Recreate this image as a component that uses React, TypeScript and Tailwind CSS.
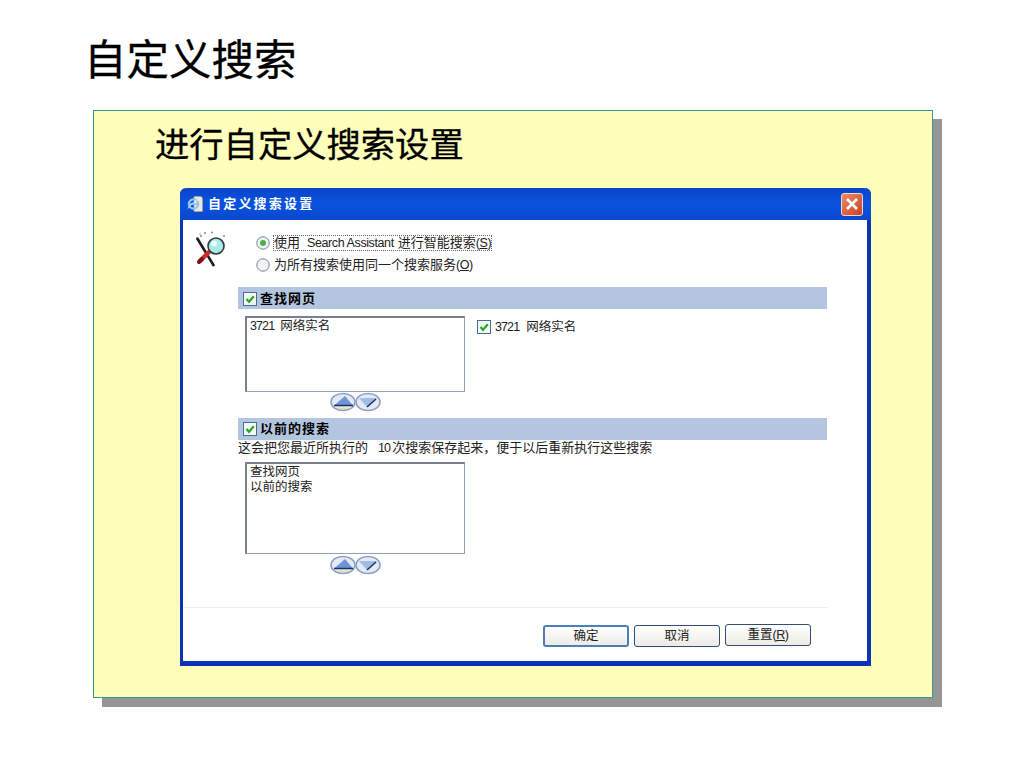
const cjk = "font-['Liberation_Sans','Noto_Sans_CJK_SC',sans-serif]";

function Lat({ children }: { children: React.ReactNode }) {
  return <span className="text-[12.5px] tracking-[-0.4px]">{children}</span>;
}

function Num({ children }: { children: React.ReactNode }) {
  return <span className="text-[12.5px] tracking-[-0.9px]">{children}</span>;
}

function Check() {
  return (
    <svg width="14" height="14" viewBox="0 0 14 14" className="shrink-0">
      <rect x="0.5" y="0.5" width="13" height="13" fill="#f7f7f2" stroke="#3f6f9c" />
      <path d="M3.5 7 L6 9.8 L10.8 4.2" fill="none" stroke="#2aa52a" strokeWidth="2.2" />
    </svg>
  );
}

function Radio({ on }: { on?: boolean }) {
  return (
    <svg width="14" height="14" viewBox="0 0 14 14" className="shrink-0">
      <circle cx="7" cy="7" r="6.2" fill="#f4f4f0" stroke="#6a86a8" />
      {on && <circle cx="7" cy="7" r="3" fill="#4cb04c" />}
    </svg>
  );
}

function Arrows() {
  return (
    <div className="flex justify-center w-[220px] -space-x-[1px]">
      <svg width="26" height="20" viewBox="0 0 26 20">
        <ellipse cx="13" cy="10" rx="12" ry="8.6" fill="#e4e9f3" stroke="#8d9fc4" strokeWidth="1.5" />
        <path d="M4 13.5 L15 4 L23 13.5 Z" fill="#6f95d8" />
        <path d="M4 13.5 L23 13.5" stroke="#1d2f63" strokeWidth="1.5" />
        <path d="M8 16.3 H18" stroke="#e4e08a" strokeWidth="1.2" />
      </svg>
      <svg width="26" height="20" viewBox="0 0 26 20">
        <ellipse cx="13" cy="10" rx="12" ry="8.6" fill="#e4e9f3" stroke="#8d9fc4" strokeWidth="1.5" />
        <path d="M4 6 L22 6 L12 15 Z" fill="#9dbde9" />
        <path d="M21 7 L12 15" stroke="#1d2f63" strokeWidth="1.5" />
      </svg>
    </div>
  );
}

function ListBox({ h, items }: { h: string; items: React.ReactNode[] }) {
  return (
    <div className={`w-[220px] ${h} bg-white border border-[#8fa0bc] border-t-2 border-l-2 border-t-[#7a7f8c] border-l-[#7a7f8c] pl-[3px] pt-[1px] text-[12.5px] leading-[15px] text-[#222]`}>
      {items.map((t, i) => (
        <div key={i}>{t}</div>
      ))}
    </div>
  );
}

function Btn({ children, strong }: { children: React.ReactNode; strong?: boolean }) {
  return (
    <div
      className={`w-[86px] h-[22px] rounded-[3px] border bg-gradient-to-b from-white to-[#ecebe4] flex items-center justify-center text-[12.5px] text-[#222] ${
        strong ? "border-2 border-[#4c7fb8]" : "border-[#2f4f78]"
      }`}
    >
      {children}
    </div>
  );
}

function Loupe() {
  return (
    <svg width="34" height="36" viewBox="0 0 34 36" className="shrink-0">
      <g fill="#7f8a99">
        <circle cx="2" cy="7" r="0.9" />
        <circle cx="6" cy="5" r="1" />
        <circle cx="10" cy="2" r="1" />
        <circle cx="17" cy="1.5" r="1" />
        <circle cx="5" cy="3" r="0.7" />
        <circle cx="29" cy="5" r="1" />
      </g>
      <path d="M2 7 L19 35" stroke="#1c1c1c" strokeWidth="2.6" />
      <path d="M14 21 L5 30" stroke="#c92c2c" strokeWidth="4.4" strokeLinecap="round" />
      <path d="M7 28 L4 31" stroke="#7a1414" strokeWidth="4" strokeLinecap="round" />
      <circle cx="21" cy="15" r="8" fill="#a9ece6" stroke="#2d3a40" strokeWidth="1.6" />
      <circle cx="19" cy="12.5" r="3" fill="#e9fffc" />
    </svg>
  );
}

function IeIcon() {
  return (
    <svg width="16" height="16" viewBox="0 0 16 16" className="shrink-0">
      <path d="M7 0.5 H14 L15.5 2 V15.5 H7 Z" fill="#ece8d4" stroke="#a9a58c" strokeWidth="0.6" />
      <circle cx="6.5" cy="8" r="4.6" fill="none" stroke="#8fc4f4" strokeWidth="2.4" />
      <path d="M2 8 H11" stroke="#8fc4f4" strokeWidth="1.8" />
      <path d="M1 12.5 C4 8 9 4 13 3" fill="none" stroke="#dff0ff" strokeWidth="1" />
    </svg>
  );
}

export default function App() {
  return (
    <div className={`w-[1024px] h-[768px] bg-white overflow-hidden pl-[84px] pt-[34px] text-black ${cjk}`}>
      <h1 className="text-[42.5px] leading-[54px] h-[54px] whitespace-nowrap [-webkit-text-stroke:0.3px_black]">自定义搜索</h1>
      <div className="ml-[9px] mt-[22px] w-[840px] h-[588px] bg-[#ffffbb] border border-[#3a9a8a] shadow-[9px_9px_0_#959595] pl-[61px] pt-[12px]">
        <h2 className="text-[34.3px] leading-[44px] h-[44px] whitespace-nowrap [-webkit-text-stroke:0.3px_black]">进行自定义搜索设置</h2>
        <div className="ml-[25px] mt-[21px] w-[691px] h-[478px] bg-white border-l-[3px] border-r-[4px] border-b-[5px] border-[#0a33b8] rounded-t-[6px] flex flex-col">
          <div className="h-[32px] -ml-[3px] -mr-[4px] rounded-t-[7px] bg-gradient-to-b from-[#0a45c8] via-[#0a53e0] to-[#0a48cc] flex items-center pl-[7px] pr-[8px] gap-[5px] shrink-0">
            <IeIcon />
            <span className="text-[13px] font-bold tracking-[2.2px] text-white">自定义搜索设置</span>
            <div className="ml-auto w-[22px] h-[23px] rounded-[3px] border border-[#f0d8d0] bg-gradient-to-br from-[#ee8a68] to-[#c8401c] flex items-center justify-center">
              <svg width="14" height="14" viewBox="0 0 14 14">
                <path d="M2 2 L12 12 M12 2 L2 12" stroke="#fff" strokeWidth="2.6" />
              </svg>
            </div>
          </div>
          <div className="relative flex-1 flex flex-col pl-[55px] pt-[16px] min-h-0">
            <div className="absolute left-[12px] top-[11px]">
              <Loupe />
            </div>
            <div className="pl-[18px] flex flex-col gap-[8px] text-[13px] text-[#222] leading-[14px] h-[51px]">
              <div className="flex items-center gap-[4px]">
                <Radio on />
                <span className="outline-dotted outline-1 outline-[#666] whitespace-nowrap">
                  使用<span className="ml-[7px] mr-[4px]"><Lat>Search Assistant</Lat></span>进行智能搜索<Lat>(<u>S</u>)</Lat>
                </span>
              </div>
              <div className="flex items-center gap-[4px]">
                <Radio />
                <span className="whitespace-nowrap">为所有搜索使用同一个搜索服务<Lat>(<u>O</u>)</Lat></span>
              </div>
            </div>
            <div className="w-[589px] h-[22px] bg-[#b4c6df] flex items-center pl-[5px] pt-[1px] gap-[3px] text-[13px] font-bold tracking-[1px]">
              <Check />
              <span>查找网页</span>
            </div>
            <div className="flex pl-[7px] mt-[7px]">
              <ListBox h="h-[76px]" items={[<><Num>3721</Num><span className="ml-[6px]">网络实名</span></>]} />
              <div className="flex items-center gap-[4px] ml-[12px] mt-[4px] h-[14px] text-[12.5px] text-[#222] whitespace-nowrap">
                <Check />
                <span><Num>3721</Num><span className="ml-[7px]">网络实名</span></span>
              </div>
            </div>
            <div className="pl-[7px]">
              <Arrows />
            </div>
            <div className="w-[589px] h-[22px] mt-[6px] bg-[#b4c6df] flex items-center pl-[5px] gap-[3px] text-[13px] font-bold tracking-[1px]">
              <Check />
              <span>以前的搜索</span>
            </div>
            <div className="text-[13px] leading-[14px] text-[#222] whitespace-nowrap mt-[1px]">
              这会把您最近所执行的<span className="ml-[10px] mr-[2px]"><Num>10</Num></span>次搜索保存起来，便于以后重新执行这些搜索
            </div>
            <div className="pl-[7px] mt-[7px]">
              <ListBox h="h-[92px]" items={["查找网页", "以前的搜索"]} />
              <div className="mt-[1px]">
                <Arrows />
              </div>
            </div>
            <div className="w-[644px] -ml-[55px] mt-[32px] border-t border-[#ececec]" />
            <div className="flex w-[573px] justify-end gap-[5px] mt-[17px]">
              <Btn strong>确定</Btn>
              <Btn>取消</Btn>
              <div className="-mt-[1px]">
                <Btn>
                  <span>重置<Lat>(<u>R</u>)</Lat></span>
                </Btn>
              </div>
            </div>
          </div>
        </div>
      </div>
    </div>
  );
}
